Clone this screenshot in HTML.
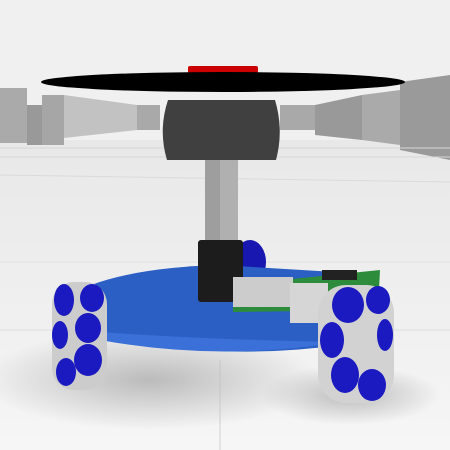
<!DOCTYPE html><html><head><style>html,body{margin:0;width:450px;height:450px;overflow:hidden;background:#f0f0f0}svg{display:block}</style></head><body>
<svg width="450" height="450" viewBox="0 0 450 450" xmlns="http://www.w3.org/2000/svg">
<defs>
<linearGradient id="fl" x1="0" y1="0" x2="0" y2="1"><stop offset="0" stop-color="#e8e8e8"/><stop offset="1" stop-color="#f6f6f6"/></linearGradient>
<radialGradient id="sh" cx="0.5" cy="0.5" r="0.5"><stop offset="0" stop-color="#bbb"/><stop offset="1" stop-color="#bbb" stop-opacity="0"/></radialGradient>
</defs>
<rect width="450" height="450" fill="#f0f0f0"/>
<rect y="140" width="450" height="310" fill="url(#fl)"/>
<rect x="0" y="88" width="27" height="55" fill="#aaa"/>
<rect x="27" y="105" width="15" height="40" fill="#999"/>
<rect x="42" y="95" width="22" height="50" fill="#a6a6a6"/>
<polygon points="64,95 137,105 137,130 64,138" fill="#c2c2c2"/>
<polygon points="137,105 160,105 160,130 137,130" fill="#a9a9a9"/>
<polygon points="280,105 315,105 315,130 280,130" fill="#a9a9a9"/>
<polygon points="315,105 362,95 362,140 315,135" fill="#999"/>
<polygon points="362,95 400,90 400,145 362,140" fill="#aaa"/>
<polygon points="400,82 450,75 450,160 400,150" fill="#9a9a9a"/>
<line x1="0" y1="148" x2="450" y2="148" stroke="#d6d6d6"/>
<line x1="0" y1="157" x2="450" y2="157" stroke="#d6d6d6"/>
<line x1="0" y1="175" x2="450" y2="182" stroke="#dadada"/>
<line x1="0" y1="262" x2="450" y2="262" stroke="#e0e0e0"/>
<line x1="0" y1="330" x2="450" y2="330" stroke="#e0e0e0"/>
<line x1="220" y1="360" x2="220" y2="450" stroke="#d0d0d0"/>
<ellipse cx="150" cy="380" rx="170" ry="50" fill="url(#sh)"/>
<ellipse cx="350" cy="395" rx="90" ry="30" fill="url(#sh)"/>
<rect x="205" y="155" width="33" height="90" fill="#9e9e9e"/>
<rect x="220" y="155" width="18" height="90" fill="#b0b0b0"/>
<path d="M168,100 L275,100 Q284,130 276,160 L167,160 Q158,130 168,100 Z" fill="#404040"/>
<rect x="188" y="66" width="70" height="12" fill="#c00" rx="2"/>
<ellipse cx="223" cy="82" rx="182" ry="10" fill="#000"/>
<ellipse cx="250" cy="262" rx="16" ry="22" fill="#1818b0"/>
<path d="M60,300 Q110,268 220,265 L335,272 L340,345 Q220,362 90,335 Z" fill="#2b5fc4"/>
<path d="M85,331 Q210,340 340,342 Q220,362 100,340 Z" fill="#3a70d8"/>
<rect x="198" y="240" width="45" height="62" rx="3" fill="#1c1c1c"/>
<polygon points="233,285 380,270 378,310 233,312" fill="#2c8c3c"/>
<rect x="233" y="277" width="60" height="30" fill="#ccc"/>
<rect x="290" y="283" width="38" height="40" fill="#d6d6d6"/>
<rect x="322" y="270" width="35" height="10" fill="#222"/>
<rect x="52" y="282" width="55" height="108" rx="22" fill="#ccc"/>
<g fill="#1a1ac0">
<ellipse cx="64" cy="300" rx="10" ry="16"/><ellipse cx="92" cy="298" rx="12" ry="14"/>
<ellipse cx="88" cy="328" rx="13" ry="15"/><ellipse cx="60" cy="335" rx="8" ry="14"/>
<ellipse cx="88" cy="360" rx="14" ry="16"/><ellipse cx="66" cy="372" rx="10" ry="14"/>
</g>
<rect x="318" y="285" width="76" height="118" rx="28" fill="#d2d2d2"/>
<g fill="#1a1ac0">
<ellipse cx="348" cy="305" rx="16" ry="18"/><ellipse cx="378" cy="300" rx="12" ry="14"/>
<ellipse cx="332" cy="340" rx="12" ry="18"/><ellipse cx="385" cy="335" rx="8" ry="16"/>
<ellipse cx="345" cy="375" rx="14" ry="18"/><ellipse cx="372" cy="385" rx="14" ry="16"/>
</g>
</svg>
</body></html>
